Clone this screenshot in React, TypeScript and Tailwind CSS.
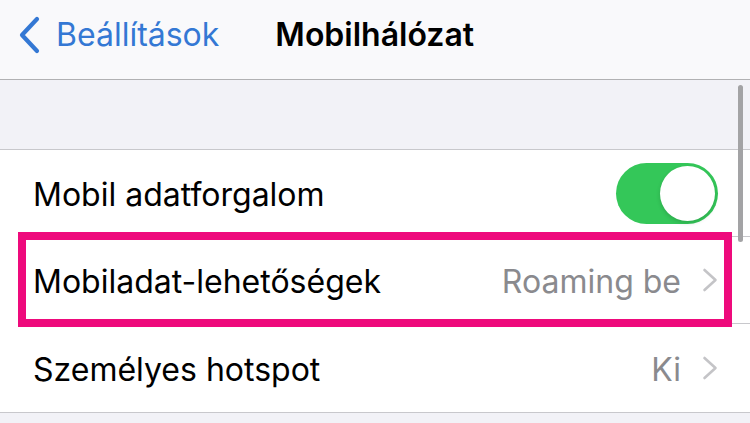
import React from 'react';

const Chevron = () => (
  <svg width="16" height="24" viewBox="0 0 16 24" className="ml-[21px] shrink-0">
    <path d="M2.5 2 L13.5 12 L2.5 22" fill="none" stroke="#c4c4c7" strokeWidth="2.6" strokeLinecap="round" strokeLinejoin="round" />
  </svg>
);

const Row = ({ label, value, last, h, children }: { label: string; value?: string; last?: boolean; h: string; children?: React.ReactNode }) => (
  <div className={`flex items-center pl-[33px] ${h}`}>
    <div className={`flex h-full flex-1 items-center pr-[32px] ${last ? '' : 'border-b border-[#c8c8cc]'}`}>
      <span className="flex-1 pt-[4px] text-[32px] text-black">{label}</span>
      {value && (
        <>
          <span className="pt-[4px] text-[32px] text-[#8a8a8e]">{value}</span>
          <Chevron />
        </>
      )}
      {children}
    </div>
  </div>
);

export default function App() {
  return (
    <div className="relative h-[423px] w-[750px] overflow-hidden bg-[#f2f2f7]" style={{ fontFamily: 'Inter, "Noto Sans", sans-serif' }}>
      <header className="relative flex h-[80px] items-center border-b border-[#b1b1b3] bg-[#f9f9fb] pb-[9px]">
        <div className="flex items-center pl-[17px] text-[#3478d4]">
          <svg width="24" height="38" viewBox="0 0 24 38">
            <path d="M20 3 L5 19 L20 35" fill="none" stroke="#3478d4" strokeWidth="4.2" strokeLinecap="round" strokeLinejoin="round" />
          </svg>
          <span className="ml-[15px] text-[32px]">Beállítások</span>
        </div>
        <span className="ml-[56px] text-[32px] font-semibold text-black">Mobilhálózat</span>
      </header>

      <div className="h-[70px] border-b border-[#c8c8cc]" />

      <div className="border-b border-[#c8c8cc] bg-white">
        <Row label="Mobil adatforgalom" h="h-[87px]">
          <div className="mr-[0px] flex h-[61px] w-[102px] items-center justify-end rounded-full bg-[#34c759] p-[3px]">
            <div className="h-[55px] w-[55px] rounded-full bg-white shadow-[0_2px_4px_rgba(0,0,0,0.15)]" />
          </div>
        </Row>
        <Row label="Mobiladat-lehetőségek" value="Roaming be" h="h-[87px]" />
        <Row label="Személyes hotspot" value="Ki" last h="h-[88px]" />
      </div>

      <div className="absolute left-[18px] top-[232px] h-[95px] w-[714px] border-[8px] border-[#ee0a7c]" />
      <div className="absolute left-[738px] top-[85px] h-[157px] w-[5px] rounded-full bg-[#a3a3a5]" />
    </div>
  );
}
